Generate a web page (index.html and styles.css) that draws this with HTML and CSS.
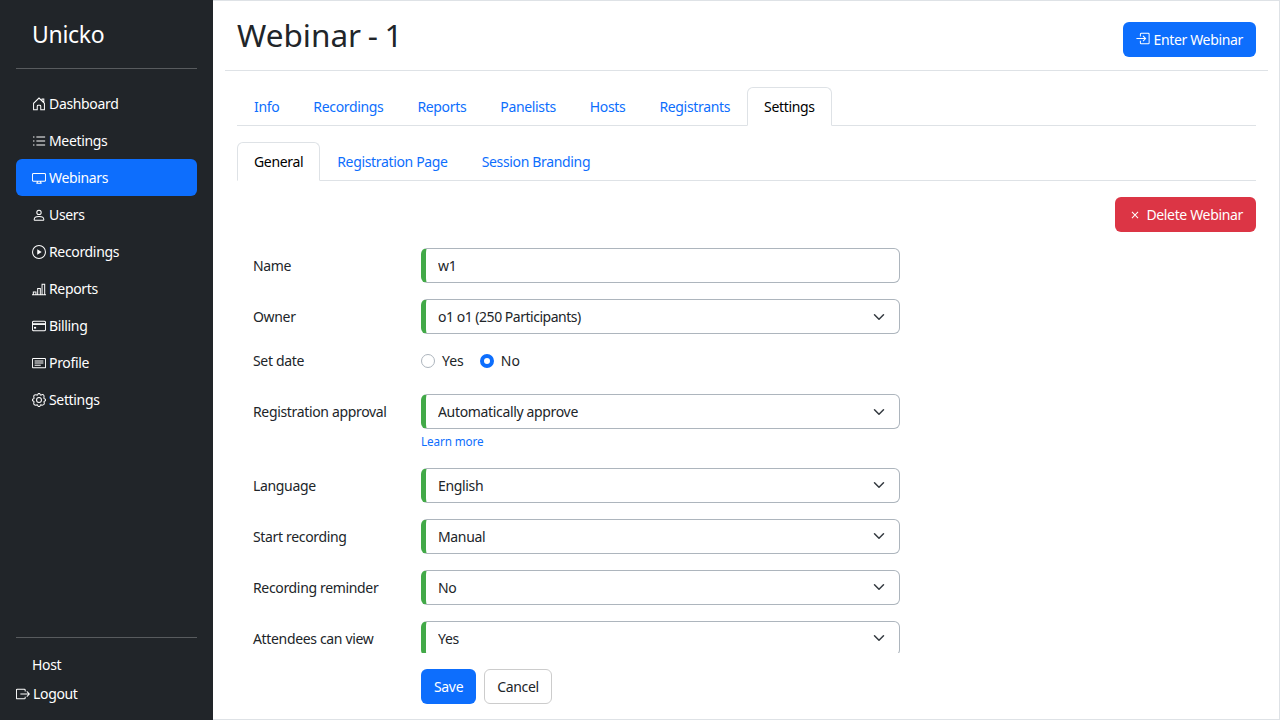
FILE: index.html
```
<!DOCTYPE html>
<html lang="en">
<head>
    <meta charset="UTF-8">
    <meta name="viewport" content="width=device-width, initial-scale=1.0">
    <title>Unicko - Webinar</title>
    <link rel="stylesheet" href="styles.css">
</head>
<body>
    <div class="layout">
        <nav class="sidebar">
            <a class="brand" href="#">Unicko</a>
            <ul class="menu">
                <li><a class="menu-link" href="#">
                    <svg class="icon" viewBox="0 0 16 16"><path d="M1.8 7.2V14.5H6V10.5Q6 9.5 7 9.5H9Q10 9.5 10 10.5V14.5H14.2V7.2L8 1.2ZM11.5 4.4V2.3H13.5V6.5" /></svg>
                    <span>Dashboard</span></a></li>
                <li><a class="menu-link" href="#">
                    <svg class="icon" viewBox="0 0 16 16"><path d="M5 3.5H15M5 8H15M5 12.5H15M1.2 3.5H2.8M1.2 8H2.8M1.2 12.5H2.8" /></svg>
                    <span>Meetings</span></a></li>
                <li><a class="menu-link active" href="#">
                    <svg class="icon" viewBox="0 0 16 16"><path d="M1.8 2.8H14.2Q15.5 2.8 15.5 4V10.5Q15.5 11.6 14.2 11.6H1.8Q.5 11.6.5 10.5V4Q.5 2.8 1.8 2.8ZM6.4 11.8Q6.4 13.5 5 14H11Q9.6 13.5 9.6 11.8" /></svg>
                    <span>Webinars</span></a></li>
                <li><a class="menu-link" href="#">
                    <svg class="icon" viewBox="0 0 16 16"><circle cx="8" cy="5" r="2.5" /><path d="M3 14Q2.5 14 2.5 13C2.5 11.2 4.5 9.7 8 9.7S13.5 11.2 13.5 13Q13.5 14 13 14Z" /></svg>
                    <span>Users</span></a></li>
                <li><a class="menu-link" href="#">
                    <svg class="icon" viewBox="0 0 16 16"><circle cx="8" cy="8" r="7.4" /><path class="solid" d="M6 4.9V11.1L11.1 8Z" /></svg>
                    <span>Recordings</span></a></li>
                <li><a class="menu-link" href="#">
                    <svg class="icon" viewBox="0 0 16 16"><path d="M0 14.5H16M1.5 14V11.5H4.5V14M6.5 14V7.5H9.5V14M11.5 14V2.5H14.5V14" /></svg>
                    <span>Reports</span></a></li>
                <li><a class="menu-link" href="#">
                    <svg class="icon" viewBox="0 0 16 16"><rect x=".5" y="2.5" width="15" height="11" rx="1.5" /><path d="M.5 5.8H15.5" stroke-width="2" /><path class="solid" d="M2.3 9H4.7V11H2.3Z" /></svg>
                    <span>Billing</span></a></li>
                <li><a class="menu-link" href="#">
                    <svg class="icon" viewBox="0 0 16 16"><rect x=".5" y="2.8" width="15" height="10.7" rx="1" /><path d="M3 5.6H13M3 8H13M3 10.5H10" /></svg>
                    <span>Profile</span></a></li>
                <li><a class="menu-link" href="#">
                    <svg class="icon" viewBox="0 0 16 16"><circle cx="8" cy="8" r="2.8" /><path d="M6.8 1.2Q8-.3 9.2 1.2L9.5 2.1 10.2 2.4 11.1 2Q13.1 1.3 13.8 3.2L13.7 4.5 13.6 5.8 13.9 6.5 14.8 6.8Q16.3 8 14.8 9.2L13.9 9.5 13.6 10.2 14 11.1Q14.5 13.8 11.5 14L10.2 13.6 9.5 13.9 9.2 14.8Q8 16.3 6.8 14.8L6.5 13.9 5.8 13.6 4.5 14Q1.8 14 2 11.3L2.4 10.2 2.1 9.5 1.2 9.2Q-.3 8 1.2 6.8L2.1 6.5 2.4 5.8 2 4.5Q1.8 1.8 4.8 2L5.8 2.4 6.5 2.1Z" /></svg>
                    <span>Settings</span></a></li>
            </ul>
            <div class="account">
                <span class="account-name">Host</span>
                <a class="logout" href="#">
                    <svg class="icon" viewBox="0 0 16 16"><path d="M10.5 5V3.5Q10.5 2.5 9.5 2.5H1.5Q.5 2.5.5 3.5V12.5Q.5 13.5 1.5 13.5H9.5Q10.5 13.5 10.5 12.5V11M5 8H15.3M12.3 5 15.3 8 12.3 11" /></svg>
                    <span>Logout</span></a>
            </div>
        </nav>

        <main class="content">
            <header class="page-header">
                <h1>Webinar - 1</h1>
                <button class="btn btn-primary">
                    <svg class="icon" viewBox="0 0 16 16"><path d="M5 5V2.5Q5 1.5 6 1.5H14Q15 1.5 15 2.5V12.5Q15 13.5 14 13.5H6Q5 13.5 5 12.5V10M.5 7.5H11M8 4.5 11 7.5 8 10.5" /></svg>
                    <span>Enter Webinar</span></button>
            </header>

            <div class="page-body">
                <ul class="tabs">
                    <li><a class="tab" href="#">Info</a></li>
                    <li><a class="tab" href="#">Recordings</a></li>
                    <li><a class="tab" href="#">Reports</a></li>
                    <li><a class="tab" href="#">Panelists</a></li>
                    <li><a class="tab" href="#">Hosts</a></li>
                    <li><a class="tab" href="#">Registrants</a></li>
                    <li><a class="tab active" href="#">Settings</a></li>
                </ul>
                <ul class="tabs">
                    <li><a class="tab active" href="#">General</a></li>
                    <li><a class="tab" href="#">Registration Page</a></li>
                    <li><a class="tab" href="#">Session Branding</a></li>
                </ul>

                <div class="toolbar">
                    <button class="btn btn-danger">
                        <svg class="icon" viewBox="0 0 16 16"><path d="M4.5 4.5 11.5 11.5M11.5 4.5 4.5 11.5" /></svg>
                        <span>Delete Webinar</span></button>
                </div>

                <form class="settings-form">
                    <div class="fields">
                        <div class="row">
                            <label for="name">Name</label>
                            <input class="control" type="text" id="name" value="w1">
                        </div>
                        <div class="row">
                            <label for="owner">Owner</label>
                            <div class="select"><select class="control owner" id="owner"><option>o1 o1 (250 Participants)</option></select>
                                <svg class="chevron" viewBox="0 0 16 16"><path d="m2 5 6 6 6-6" /></svg></div>
                        </div>
                        <div class="row row-radio">
                            <span>Set date</span>
                            <div class="radios">
                                <label class="radio"><input type="radio" name="date">Yes</label>
                                <label class="radio"><input type="radio" name="date" checked>No</label>
                            </div>
                        </div>
                        <div class="row">
                            <label for="approval">Registration approval</label>
                            <div class="select"><select class="control" id="approval"><option>Automatically approve</option></select>
                                <svg class="chevron" viewBox="0 0 16 16"><path d="m2 5 6 6 6-6" /></svg></div>
                            <a class="help" href="#">Learn more</a>
                        </div>
                        <div class="row">
                            <label for="language">Language</label>
                            <div class="select"><select class="control" id="language"><option>English</option></select>
                                <svg class="chevron" viewBox="0 0 16 16"><path d="m2 5 6 6 6-6" /></svg></div>
                        </div>
                        <div class="row">
                            <label for="start">Start recording</label>
                            <div class="select"><select class="control" id="start"><option>Manual</option></select>
                                <svg class="chevron" viewBox="0 0 16 16"><path d="m2 5 6 6 6-6" /></svg></div>
                        </div>
                        <div class="row">
                            <label for="reminder">Recording reminder</label>
                            <div class="select"><select class="control" id="reminder"><option>No</option></select>
                                <svg class="chevron" viewBox="0 0 16 16"><path d="m2 5 6 6 6-6" /></svg></div>
                        </div>
                        <div class="row">
                            <label for="view">Attendees can view</label>
                            <div class="select"><select class="control" id="view"><option>Yes</option></select>
                                <svg class="chevron" viewBox="0 0 16 16"><path d="m2 5 6 6 6-6" /></svg></div>
                        </div>
                    </div>
                    <div class="actions">
                        <button class="btn btn-primary" type="button">Save</button>
                        <button class="btn btn-light" type="button">Cancel</button>
                    </div>
                </form>
            </div>
        </main>
    </div>
</body>
</html>
```
FILE: styles.css
```
* {
    box-sizing: border-box;
}
body {
    margin: 0;
    font-family: "Noto Sans", sans-serif;
    font-size: 14px;
    line-height: 21px;
    letter-spacing: -0.34px;
    color: #212529;
    background: #fff;
}
a {
    color: #0d6efd;
    text-decoration: none;
}
ul {
    list-style: none;
    margin: 0;
    padding: 0;
}
.layout {
    display: flex;
    height: 100vh;
    overflow: hidden;
}
.icon {
    width: 14px;
    height: 14px;
    flex: none;
    fill: none;
    stroke: currentColor;
    stroke-width: 1.15;
}
.icon .solid {
    fill: currentColor;
    stroke: none;
}

/* sidebar */
.sidebar {
    width: 213px;
    flex: none;
    display: flex;
    flex-direction: column;
    padding: 0 16px;
    background: #212529;
    color: #fff;
}
.sidebar a {
    color: #fff;
}
.brand {
    height: 69px;
    padding: 16px 16px 0;
    font-size: 23px;
    line-height: 36px;
    letter-spacing: -0.3px;
    border-bottom: 1px solid #585b5e;
}
.menu {
    flex: 1;
    padding-top: 16px;
}
.menu-link {
    display: flex;
    align-items: center;
    gap: 3px;
    padding: 8px 16px;
    border-radius: 6px;
}
.menu-link.active {
    background: #0d6efd;
}
.account {
    height: 83px;
    padding-top: 16px;
    border-top: 1px solid #585b5e;
}
.account-name {
    display: block;
    padding-left: 16px;
    margin-bottom: 8px;
}
.logout {
    display: flex;
    align-items: center;
    gap: 3px;
}

/* content */
.content {
    flex: 1;
    display: flex;
    flex-direction: column;
    padding: 0 11px 0 12px;
    border: 1px solid #dee2e6;
    border-left: none;
}
.page-header {
    display: flex;
    justify-content: space-between;
    align-items: center;
    height: 70px;
    padding: 8px 12px 0;
    border-bottom: 1px solid #dee2e6;
}
.page-header .icon {
    margin-bottom: 2px;
}
h1 {
    margin: 0;
    padding-bottom: 10px;
    font-size: 31.5px;
    font-weight: 400;
    line-height: 42px;
    letter-spacing: 0;
    word-spacing: -1.5px;
}
.btn {
    display: inline-flex;
    align-items: center;
    gap: 3px;
    height: 35px;
    padding: 0 12px;
    border: 1px solid transparent;
    border-radius: 6px;
    font: inherit;
    letter-spacing: inherit;
    color: #fff;
}
.btn-primary {
    background: #0d6efd;
}
.btn-danger {
    background: #dc3545;
}
.btn-light {
    background: #fff;
    border-color: #ccc;
    color: #212529;
}
.page-body {
    flex: 1;
    min-height: 0;
    display: flex;
    flex-direction: column;
    padding: 16px 12px 15px;
}
.tabs {
    display: flex;
    height: 39px;
    margin-bottom: 16px;
    border-bottom: 1px solid #dee2e6;
}
.tab {
    display: block;
    height: 39px;
    padding: 8px 16px;
    border: 1px solid transparent;
    border-radius: 6px 6px 0 0;
}
.tab.active {
    color: #000;
    background: #fff;
    border-color: #dee2e6 #dee2e6 #fff;
}
.toolbar {
    display: flex;
    justify-content: flex-end;
    margin-bottom: 16px;
}
.btn-danger .icon {
    margin-right: 1px;
}

/* form */
.settings-form {
    flex: 1;
    min-height: 0;
    display: flex;
    flex-direction: column;
}
.fields {
    flex: 1;
    min-height: 0;
    overflow: hidden;
    padding-left: 16px;
}
.row {
    display: grid;
    grid-template-columns: 168px 479px;
    align-items: center;
    margin-bottom: 16px;
}
.row-radio {
    height: 28px;
    align-items: start;
}
.control {
    display: block;
    width: 100%;
    height: 35px;
    padding: 0 12px;
    border: 1px solid #adb5bd;
    border-left: 5px solid #42a948;
    border-radius: 6px;
    background: #fff;
    font: inherit;
    letter-spacing: inherit;
    color: #212529;
    appearance: none;
}
.owner {
    letter-spacing: -0.48px;
}
.select {
    display: grid;
    align-items: center;
}
.select > * {
    grid-area: 1 / 1;
}
.chevron {
    justify-self: end;
    width: 12px;
    height: 12px;
    margin-right: 15px;
    fill: none;
    stroke: #343a40;
    stroke-width: 2;
    stroke-linecap: round;
    stroke-linejoin: round;
}
.radios {
    display: flex;
    gap: 16px;
}
.radio {
    display: flex;
    align-items: center;
    gap: 7px;
    letter-spacing: 0;
}
.radio input {
    appearance: none;
    width: 14px;
    height: 14px;
    margin: 0;
    border: 1px solid #adb5bd;
    border-radius: 50%;
    background: #fff;
}
.radio input:checked {
    border: 4px solid #0d6efd;
}
.help {
    grid-column: 2;
    margin: 3px 0 1px;
    font-size: 11.7px;
    line-height: 18.6px;
    letter-spacing: -0.1px;
}
.actions {
    display: flex;
    gap: 8px;
    padding: 16px 0 0 184px;
}
```
